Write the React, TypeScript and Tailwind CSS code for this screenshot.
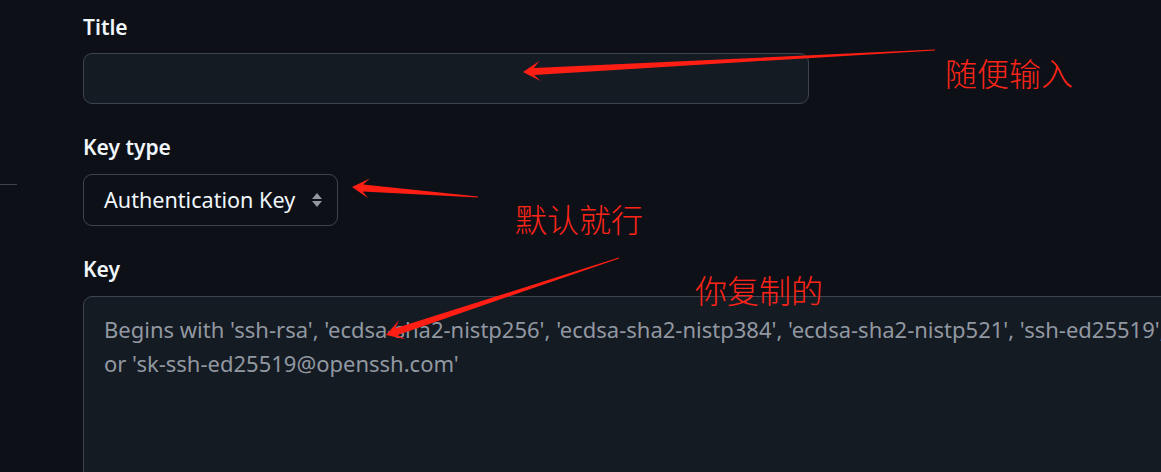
import React from 'react';

type Pt = [number, number];

// tapered red annotation arrow: thin at the tail, wide at the head
const arrowPoints = (tail: Pt, tip: Pt) => {
  const dx = tip[0] - tail[0];
  const dy = tip[1] - tail[1];
  const len = Math.hypot(dx, dy);
  const ux = dx / len;
  const uy = dy / len;
  const nx = -uy;
  const ny = ux;
  const headLen = 17;
  const headHalf = 10;
  const shaftHalf = 3.5;
  const base: Pt = [tip[0] - ux * headLen, tip[1] - uy * headLen];
  const neck: Pt = [tip[0] - ux * headLen * 0.65, tip[1] - uy * headLen * 0.65];
  const pts: Pt[] = [
    [tail[0] + nx * 0.4, tail[1] + ny * 0.4],
    [neck[0] + nx * shaftHalf, neck[1] + ny * shaftHalf],
    [base[0] + nx * headHalf, base[1] + ny * headHalf],
    tip,
    [base[0] - nx * headHalf, base[1] - ny * headHalf],
    [neck[0] - nx * shaftHalf, neck[1] - ny * shaftHalf],
    [tail[0] - nx * 0.4, tail[1] - ny * 0.4],
  ];
  return pts.map((p) => `${p[0].toFixed(1)},${p[1].toFixed(1)}`).join(' ');
};

const Annotations: React.FC = () => (
  <>
    <svg className="absolute inset-0 pointer-events-none" width="1161" height="472">
      <polygon points={arrowPoints([935, 50], [523, 72])} fill="#ff1e14" />
      <polygon points={arrowPoints([478, 197], [352, 187])} fill="#ff1e14" />
      <polygon points={arrowPoints([619, 258], [386, 335])} fill="#ff1e14" />
    </svg>
    <span className="absolute left-[945px] top-[54px] text-[32px] leading-[40px] text-[#ff2418] font-light whitespace-nowrap">
      随便输入
    </span>
    <span className="absolute left-[515px] top-[200px] text-[32px] leading-[40px] text-[#ff2418] font-light whitespace-nowrap">
      默认就行
    </span>
    <span className="absolute left-[695px] top-[271px] text-[32px] leading-[40px] text-[#ff2418] font-light whitespace-nowrap">
      你复制的
    </span>
  </>
);

const SelectArrows: React.FC = () => (
  <svg width="12" height="16" viewBox="0 0 12 16" fill="#9198a1">
    <path d="M6 1 L11 7 H1 Z" />
    <path d="M6 15 L11 9 H1 Z" />
  </svg>
);

export default function App() {
  return (
    <div
      className="relative w-full h-[472px] overflow-hidden bg-[#0d1117] text-[#f0f6fc]"
      style={{ fontFamily: '"Noto Sans", "Noto Sans CJK SC", sans-serif' }}
    >
      {/* sidebar divider stub */}
      <div className="absolute left-0 top-[184px] w-[17px] h-px bg-[#3d444d]" />

      <div className="flex flex-col pl-[83px] pt-[12px]">
        <label className="text-[21px] font-semibold leading-[30px] mb-[11px]">Title</label>
        <input
          type="text"
          className="w-[726px] h-[51px] rounded-[9px] border border-[#3d444d] bg-[#151b23] px-[20px] text-[20px] outline-none"
        />

        <label className="text-[21px] font-semibold leading-[30px] mt-[28px] mb-[12px]">Key type</label>
        <div className="flex items-center justify-between w-[255px] h-[52px] rounded-[9px] border border-[#3d444d] bg-[#0d1117] pl-[20px] pr-[14px]">
          <span className="text-[21.6px] leading-none">Authentication Key</span>
          <SelectArrows />
        </div>

        <label className="text-[21px] font-semibold leading-[30px] mt-[28px] mb-[12px]">Key</label>
        <div className="w-[1120px] h-[220px] rounded-tl-[9px] border border-[#3d444d] bg-[#151b23] pl-[20px] pt-[15px] text-[22px] leading-[34px] text-[#9198a1] overflow-hidden">
          <div className="whitespace-nowrap">
            Begins with 'ssh-rsa', 'ecdsa-sha2-nistp256', 'ecdsa-sha2-nistp384', 'ecdsa-sha2-nistp521', 'ssh-ed25519',
          </div>
          <div className="whitespace-nowrap">or 'sk-ssh-ed25519@openssh.com'</div>
        </div>
      </div>

      <Annotations />
    </div>
  );
}
